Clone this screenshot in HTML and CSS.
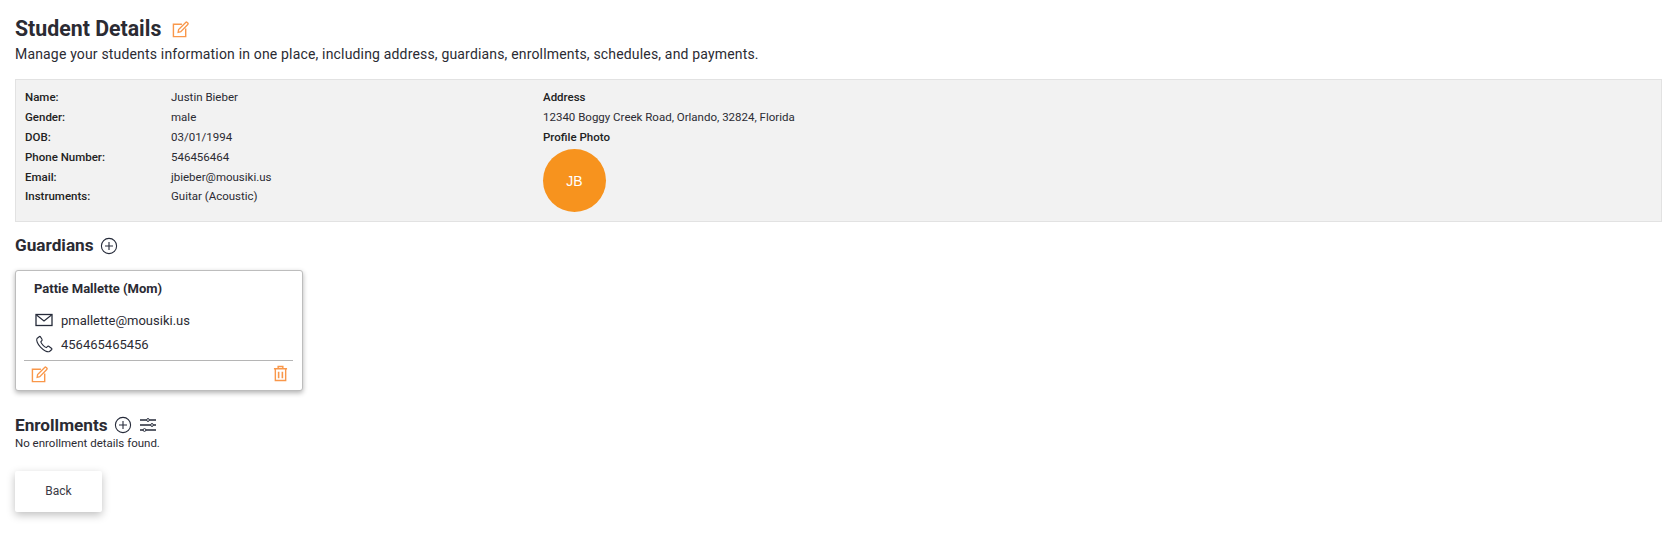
FILE: index.html
```html
<!DOCTYPE html>
<html>
<head>
    <title>Student Details</title>
    <link rel="stylesheet" href="styles.css">
</head>
<body>
    <div class="page-head">
        <h1>Student Details</h1>
        <svg class="icon-edit head-edit" width="17" height="17" viewBox="0 0 18 18"><use href="#edit-icon"></use></svg>
    </div>
    <p class="subtitle">Manage your students information in one place, including address, guardians, enrollments, schedules, and payments.</p>

    <div class="details">
        <div class="details-left">
            <div class="row"><span class="label">Name:</span><span>Justin Bieber</span></div>
            <div class="row"><span class="label">Gender:</span><span>male</span></div>
            <div class="row"><span class="label">DOB:</span><span>03/01/1994</span></div>
            <div class="row"><span class="label">Phone Number:</span><span>546456464</span></div>
            <div class="row"><span class="label">Email:</span><span>jbieber@mousiki.us</span></div>
            <div class="row row-last"><span class="label">Instruments:</span><span>Guitar (Acoustic)</span></div>
        </div>
        <div class="details-right">
            <div class="row label">Address</div>
            <div class="row">12340 Boggy Creek Road, Orlando, 32824, Florida</div>
            <div class="row label">Profile Photo</div>
            <div class="avatar">JB</div>
        </div>
    </div>

    <div class="section-head guardians-head">
        <h2>Guardians</h2>
        <svg class="icon-dark head-plus" width="18" height="18" viewBox="0 0 18 18"><use href="#plus-icon"></use></svg>
    </div>

    <div class="card">
        <h3>Pattie Mallette (Mom)</h3>
        <div class="contact">
            <svg class="icon-dark" width="18" height="14" viewBox="0 0 18 14">
                <rect x="1" y="1.5" width="16" height="11" fill="none" stroke="currentColor" stroke-width="1.3"></rect>
                <path d="M1.5 2l7.500 6 7.500-6" fill="none" stroke="currentColor" stroke-width="1.2"></path>
            </svg>
            <span>pmallette@mousiki.us</span>
        </div>
        <div class="contact">
            <svg class="icon-dark" width="18" height="18" viewBox="0 0 18 18">
                <path d="M4.500 1.500L2 3.500C1 5 2.500 9 5.500 12.200C8.500 15.500 12.500 17.300 14.500 16.500L16.800 14.500C17 14 17 13.800 16.700 13.500L13.700 11.300C13.300 11 13 11.100 12.700 11.300L11.300 12.600C9.500 12 6.500 9 5.800 6.800L7 5.300C7.300 5 7.300 4.700 7 4.300L5.300 1.600C5.100 1.300 4.800 1.300 4.500 1.500z" fill="none" stroke="currentColor" stroke-width="1.1" stroke-linejoin="round"></path>
            </svg>
            <span>456465465456</span>
        </div>
        <div class="card-actions">
            <svg class="icon-edit" width="17" height="17" viewBox="0 0 18 18"><use href="#edit-icon"></use></svg>
            <svg class="icon-edit trash" width="15" height="17" viewBox="0 0 16 18">
                <path d="M1 4h14M5.500 4V1.500h5V4M2.500 4v12.500h11V4" fill="none" stroke="currentColor" stroke-width="1.500"></path>
                <path d="M6 7v7M10 7v7" fill="none" stroke="currentColor" stroke-width="1.700"></path>
            </svg>
        </div>
    </div>

    <div class="section-head enroll-head">
        <h2>Enrollments</h2>
        <svg class="icon-dark" width="18" height="18" viewBox="0 0 18 18"><use href="#plus-icon"></use></svg>
        <svg class="icon-dark sliders" width="16" height="14" viewBox="0 0 16 14">
            <path d="M0 2h6.500M9.500 2H16M0 7h10.500M13.500 7H16M0 12h3M6 12h10" fill="none" stroke="currentColor" stroke-width="1.300"></path>
            <circle cx="8" cy="2" r="1.400" fill="none" stroke="currentColor"></circle>
            <circle cx="12" cy="7" r="1.400" fill="none" stroke="currentColor"></circle>
            <circle cx="4.500" cy="12" r="1.400" fill="none" stroke="currentColor"></circle>
        </svg>
    </div>
    <p class="empty">No enrollment details found.</p>

    <button class="back">Back</button>

    <!-- shared icons -->
    <svg class="defs" width="0" height="0">
        <defs>
            <g id="edit-icon" fill="none" stroke="currentColor">
                <path d="M10.500 3.500H1.500V16.500H14.500V8" stroke-width="1.500"></path>
                <path d="M6.500 12L7 9L14.500 1.500C15 1 15.500 1 16 1.500L16.700 2.200C17.200 2.700 17.200 3.200 16.700 3.700L9.300 11.300z" stroke-width="1.400"></path>
            </g>
            <g id="plus-icon" fill="none" stroke="currentColor" stroke-width="1.100">
                <circle cx="9" cy="9" r="7.600"></circle>
                <path d="M9 5v8M5 9h8"></path>
            </g>
        </defs>
    </svg>
</body>
</html>
```

FILE: styles.css
```css
body {
    margin: 0;
    padding: 17px 17px 39px 15px;
    font-family: Roboto, sans-serif;
    font-size: 11.5px;
    color: #2b2b33;
    background-color: #fff;
}

h1, h2, h3, p {
    margin: 0;
}

.page-head {
    display: flex;
    align-items: center;
    gap: 11px;
    height: 24px;
}

h1 {
    font-size: 21.3px;
    font-weight: 700;
    line-height: 24px;
}

.subtitle {
    margin-top: 3px;
    font-size: 14px;
    line-height: 20px;
    letter-spacing: 0.17px;
}

.details {
    display: flex;
    box-sizing: border-box;
    height: 143px;
    margin-top: 15px;
    padding: 7px 9px;
    background-color: #f2f2f2;
    border: 1px solid #e2e2e2;
}

.details-left {
    width: 518px;
}

.row {
    display: flex;
    height: 20px;
    line-height: 20px;
}

.row-last {
    margin-top: -1px;
}

.label {
    font-weight: 500;
    color: #222;
}

.details-left .label {
    width: 146px;
}

.avatar {
    display: flex;
    align-items: center;
    justify-content: center;
    width: 63px;
    height: 63px;
    margin-top: 2px;
    border-radius: 50%;
    background-color: #f7931e;
    color: #fff;
    font-family: "Liberation Sans", sans-serif;
    font-size: 14px;
}

.section-head {
    display: flex;
    align-items: center;
    gap: 6px;
    height: 22px;
}

h2 {
    font-size: 17.2px;
    font-weight: 700;
    line-height: 22px;
}

.guardians-head {
    margin-top: 12px;
}

.head-plus {
    margin-top: 1px;
}

.card {
    box-sizing: border-box;
    width: 288px;
    height: 121px;
    margin-top: 14px;
    padding: 10px 9px 0 8px;
    background-color: #fff;
    border: 1px solid #bdbdbd;
    border-radius: 3px;
    box-shadow: 0 2px 5px rgba(0, 0, 0, 0.3);
}

h3 {
    padding-left: 10px;
    font-size: 13px;
    font-weight: 700;
    line-height: 16px;
}

.contact {
    display: flex;
    align-items: center;
    gap: 8px;
    height: 24px;
    padding-left: 11px;
    font-size: 13px;
}

h3 + .contact {
    margin-top: 11px;
}

.card-actions {
    display: flex;
    align-items: center;
    justify-content: space-between;
    height: 26px;
    margin-top: 4px;
    padding: 0 5px 0 7px;
    border-top: 1px solid #b5b5b5;
}

.trash {
    margin-top: -2px;
}

.icon-edit {
    color: #f9974a;
}

.icon-dark {
    color: #262b3a;
}

.enroll-head {
    margin-top: 23px;
}

.sliders {
    margin-left: 2px;
}

.empty {
    line-height: 14px;
}

.back {
    display: block;
    width: 87px;
    height: 41px;
    margin-top: 21px;
    padding: 0 0 2px;
    border: none;
    border-radius: 2px;
    background-color: #fff;
    box-shadow: 0 3px 8px rgba(0, 0, 0, 0.25);
    font-family: Roboto, sans-serif;
    font-size: 12px;
    color: #3a3a45;
}

.defs {
    position: absolute;
}
```
